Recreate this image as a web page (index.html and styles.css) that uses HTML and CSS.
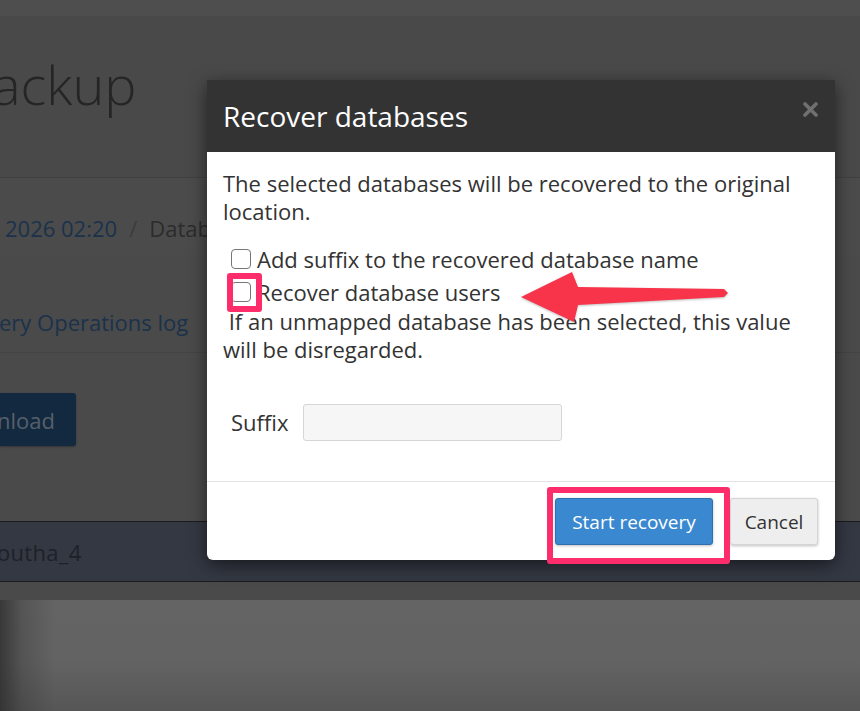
FILE: index.html
```html
<!DOCTYPE html>
<html lang="en">
<head>
<meta charset="utf-8">
<title>Recover databases</title>
<link rel="stylesheet" href="styles.css">
</head>
<body>
  <!-- dimmed page behind the dialog -->
  <div class="page">
    <div class="topbar"></div>
    <div class="title-area"><h1 class="page-title">ackup</h1></div>
    <div class="crumbs">
      <a class="crumb-link">2026 02:20</a>
      <span class="crumb-sep">/</span>
      <span class="crumb-current">Datab</span>
    </div>
    <div class="tabs"><a class="tab-link">ery Operations log</a></div>
    <div class="toolbar"><span class="btn-download">nload</span></div>
    <div class="table-row"><span class="cell">outha_4</span></div>
    <div class="spacer"></div>
    <div class="lower"></div>
  </div>

  <!-- dialog -->
  <div class="modal">
    <div class="modal-header">
      <h2 class="modal-title">Recover databases</h2>
      <span class="modal-close" aria-label="Close">
        <svg width="15" height="15" viewBox="0 0 15 15"><path d="M2 2 L13 13 M13 2 L2 13" stroke="#707070" stroke-width="3.6" stroke-linecap="round"/></svg>
      </span>
    </div>
    <div class="modal-body">
      <p class="intro">The selected databases will be recovered to the original location.</p>
      <label class="check-row"><input type="checkbox" class="check"><span>Add suffix to the recovered database name</span></label>
      <label class="check-row check-row-2"><input type="checkbox" class="check"><span>Recover database users</span></label>
      <p class="hint">&nbsp;If an unmapped database has been selected, this value will be disregarded.</p>
      <div class="field">
        <label class="field-label">Suffix</label>
        <input type="text" class="field-input">
      </div>
    </div>
    <div class="modal-footer">
      <button class="btn btn-primary">Start recovery</button>
      <button class="btn btn-default">Cancel</button>
    </div>
  </div>

  <!-- callouts -->
  <div class="mark mark-check"></div>
  <div class="mark mark-start"></div>
  <svg class="arrow" width="220" height="65" viewBox="0 0 220 65">
    <polygon points="6,32 57,7 63,22 209,24 213,28 209,32 63,40 59,57" fill="#f8344a"/>
  </svg>
</body>
</html>
```

FILE: styles.css
```css
html, body {
  margin: 0;
  padding: 0;
}

body {
  width: 860px;
  height: 711px;
  overflow: hidden;
  position: relative;
  background: #4a4a4a;
  font-family: "Open Sans", "Noto Sans", sans-serif;
}

/* ---------- dimmed page ---------- */
.page {
  display: flex;
  flex-direction: column;
  height: 711px;
}

.topbar {
  height: 16px;
  background: #4e4e4e;
}

.title-area {
  height: 161px;
  border-bottom: 1px solid #414141;
  background: #494949;
}

.page-title {
  margin: 33px 0 0 -8px;
  font-size: 54px;
  font-weight: 300;
  line-height: 70px;
  color: #252525;
}

.crumbs {
  height: 77px;
  box-sizing: border-box;
  padding-top: 36px;
  padding-left: 5px;
  background: #4b4b4b;
  font-size: 22px;
  line-height: 28px;
  display: flex;
}

.crumb-link {
  color: #1a324b;
}

.crumb-sep {
  color: #3c3c3c;
  margin: 0 12px;
}

.crumb-current {
  color: #2c2c2c;
}

.tabs {
  height: 98px;
  box-sizing: border-box;
  padding-top: 53px;
  border-bottom: 1px solid #444444;
  font-size: 22px;
  line-height: 28px;
}

.tab-link {
  display: block;
  margin-left: -1px;
  color: #1a324b;
}

.toolbar {
  height: 168px;
  box-sizing: border-box;
  padding-top: 40px;
}

.btn-download {
  display: flex;
  align-items: center;
  width: 76px;
  height: 53px;
  box-sizing: border-box;
  background: #13293f;
  border-radius: 0 3px 3px 0;
  box-shadow: 0 1px 2px rgba(0, 0, 0, 0.3);
  color: #56606b;
  font-size: 22px;
  text-indent: -3px;
}

.table-row {
  height: 61px;
  box-sizing: border-box;
  border-top: 1px solid #1b1b1d;
  border-bottom: 1px solid #1b1b1d;
  background: #343843;
  display: flex;
  align-items: center;
  font-size: 22px;
  color: #1e2128;
}

.cell {
  margin-left: -3px;
  letter-spacing: 0.3px;
}

.spacer {
  height: 18px;
  background: #4a4a4a;
}

.lower {
  flex: 1;
  background:
    radial-gradient(ellipse 260px 110px at 860px 720px, rgba(44, 54, 70, 0.95), rgba(44, 54, 70, 0)),
    linear-gradient(to right, rgba(38, 38, 38, 0.7), rgba(38, 38, 38, 0.25) 22px, rgba(38, 38, 38, 0) 55px),
    linear-gradient(to bottom, #646464 0, #636363 55%, #565656 100%);
}

/* ---------- dialog ---------- */
.modal {
  position: absolute;
  left: 207px;
  top: 80px;
  width: 628px;
  background: #ffffff;
  border-radius: 0 0 6px 6px;
  box-shadow: 0 5px 18px rgba(0, 0, 0, 0.55);
  color: #333333;
}

.modal-header {
  height: 72px;
  box-sizing: border-box;
  padding: 0 17px 0 16px;
  background: #333333;
  display: flex;
  align-items: center;
  justify-content: space-between;
}

.modal-title {
  margin: 0;
  font-size: 28px;
  font-weight: 400;
  color: #ffffff;
  line-height: 36px;
}

.modal-close {
  display: flex;
  margin-top: -14px;
}

.modal-body {
  padding: 17px 16px 40px;
  font-size: 22px;
  line-height: 28px;
}

.intro {
  margin: 0;
}

.check-row {
  display: flex;
  align-items: center;
  margin-top: 20px;
}

.check-row-2 {
  margin-top: 5px;
}

.check {
  appearance: none;
  -webkit-appearance: none;
  width: 20px;
  height: 20px;
  box-sizing: border-box;
  margin: 0 6px 0 8px;
  border: 1.5px solid #767676;
  border-radius: 4px;
  background: #ffffff;
}

.hint {
  margin: 1px 0 0;
}

.field {
  display: flex;
  align-items: center;
  margin-top: 41px;
}

.field-label {
  width: 72px;
  margin-left: 8px;
  margin-top: -2px;
}

.field-input {
  width: 259px;
  height: 37px;
  box-sizing: border-box;
  border: 1px solid #d6d6d6;
  border-radius: 3px;
  background: #f6f6f6;
}

.modal-footer {
  border-top: 1px solid #e3e3e3;
  padding: 16px 17px 15px;
  display: flex;
  justify-content: flex-end;
  gap: 17px;
}

.btn {
  height: 47px;
  box-sizing: border-box;
  border-radius: 3px;
  font-family: "Open Sans", "Noto Sans", sans-serif;
  font-size: 19px;
  padding: 0;
  box-shadow: 0 1px 3px rgba(0, 0, 0, 0.25);
}

.btn-primary {
  width: 158px;
  background: #3a88cf;
  border: 1px solid #2e70ad;
  color: #ffffff;
}

.btn-default {
  width: 88px;
  background: #eeeeee;
  border: 1px solid #d5d5d5;
  color: #333333;
}

/* ---------- callouts ---------- */
.mark {
  position: absolute;
  box-sizing: border-box;
  border: 6px solid #fd2d6c;
  border-radius: 3px;
}

.mark-check {
  left: 227px;
  top: 273px;
  width: 35px;
  height: 39px;
}

.mark-start {
  left: 547px;
  top: 487px;
  width: 183px;
  height: 77px;
}

.arrow {
  position: absolute;
  left: 515px;
  top: 265px;
  filter: drop-shadow(0 1px 1px rgba(0, 0, 0, 0.25));
}
```
